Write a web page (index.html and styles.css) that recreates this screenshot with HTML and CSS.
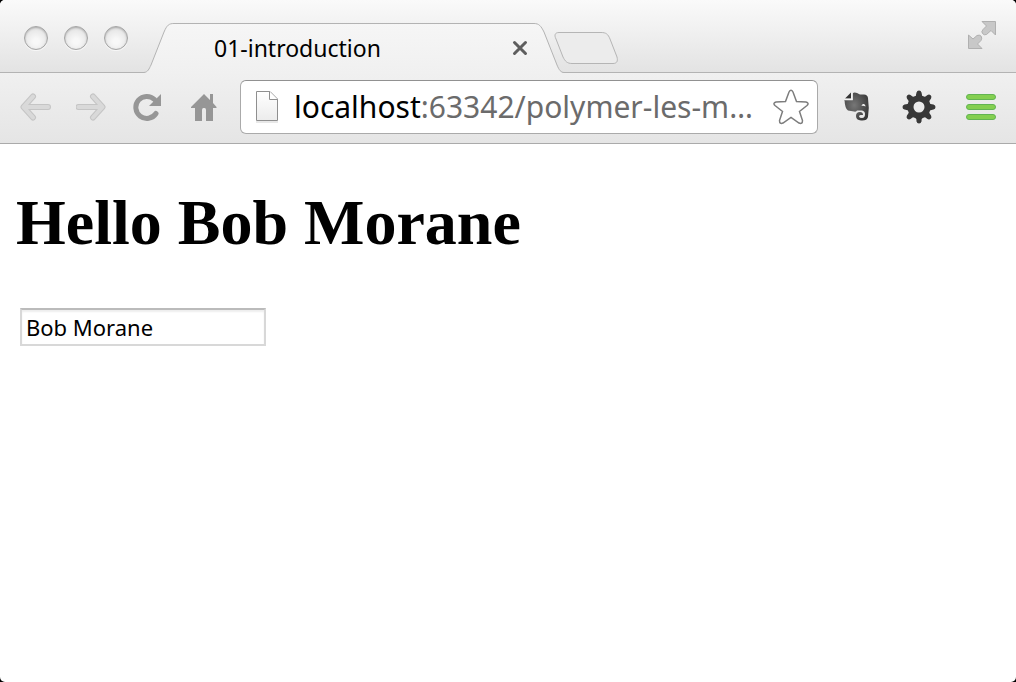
FILE: index.html
```html
<!DOCTYPE html>
<html lang="en">
<head>
<meta charset="utf-8">
<title>01-introduction</title>
<link rel="stylesheet" href="styles.css">
</head>
<body>
<div class="window">
  <header class="tab-strip">
    <div class="lights">
      <button class="light" aria-label="Close window"></button>
      <button class="light" aria-label="Minimize window"></button>
      <button class="light" aria-label="Zoom window"></button>
    </div>
    <div class="tab">
      <svg class="tab-shape" viewBox="0 0 420 50" aria-hidden="true">
        <defs>
          <linearGradient id="tabFill" x1="0" y1="0" x2="0" y2="1">
            <stop offset="0" stop-color="#f6f6f6"/><stop offset="1" stop-color="#f0f0f0"/>
          </linearGradient>
        </defs>
        <path d="M0 50V49.500C4 49 5 46 7 42L20 9C23 2 25 .5 30 .5H390C395 .5 397 3 400 9L413 42C415 47 417 49.500 420 49.500V50Z" fill="url(#tabFill)"/>
        <path d="M0 49.500C4 49 5 46 7 42L20 9C23 2 25 .5 30 .5H390C395 .5 397 3 400 9L413 42C415 47 417 49.500 420 49.500" fill="none" stroke="#b3b3b3"/>
      </svg>
      <span class="tab-title">01-introduction</span>
      <button class="tab-close" aria-label="Close tab">
        <svg width="16" height="16" viewBox="0 0 16 16"><path d="M2.500 2.500l11 11M13.500 2.500l-11 11" stroke="#5e5e5e" stroke-width="3" stroke-linecap="round"/></svg>
      </button>
    </div>
    <button class="new-tab" aria-label="New tab">
      <svg width="66" height="34" viewBox="0 0 66 34"><path d="M6 1.500H48C53 1.500 55 3 57 8L64 26C65 30 64 32.500 60 32.500H19C14 32.500 12 30 10 26L3 8C1 4 2 1.500 6 1.500Z" fill="#ececec" stroke="#b5b5b5"/></svg>
    </button>
    <button class="fullscreen" aria-label="Full screen">
      <svg width="30" height="30" viewBox="0 0 30 30">
        <path d="M15 1.500H28.500V15L24 10.500L19.500 14.500Q17 15.500 15.500 13.500Q14 11.500 16 9.500L19.500 6Z" fill="#c8c8c8" stroke="#b0b0b0"/>
        <path d="M1.500 15L6 19L10 15.500Q12.500 14.500 14 16Q15.500 18 14 20.500L10.500 24L15 28.500H1.500Z" fill="#c8c8c8" stroke="#b0b0b0"/>
      </svg>
    </button>
  </header>

  <nav class="toolbar">
    <div class="nav-buttons">
      <button class="tool" aria-label="Back">
        <svg width="32" height="28" viewBox="0 0 32 28"><path d="M28 14H4M13 3.500L3.500 14L13 24.500" fill="none" stroke="#c5c5c5" stroke-width="6" stroke-linecap="round" stroke-linejoin="round"/><path d="M28 14H4M13 3.500L3.500 14L13 24.500" fill="none" stroke="#d9d9d9" stroke-width="4" stroke-linecap="round" stroke-linejoin="round"/></svg>
      </button>
      <button class="tool" aria-label="Forward">
        <svg width="32" height="28" viewBox="0 0 32 28"><path d="M2.500 14H26M17 3.500L26.500 14L17 24.500" fill="none" stroke="#c5c5c5" stroke-width="6" stroke-linecap="round" stroke-linejoin="round"/><path d="M2.500 14H26M17 3.500L26.500 14L17 24.500" fill="none" stroke="#d9d9d9" stroke-width="4" stroke-linecap="round" stroke-linejoin="round"/></svg>
      </button>
      <button class="tool" aria-label="Reload">
        <svg width="32" height="28" viewBox="0 0 32 28"><path d="M24 20.500A11 11 0 1 1 22.500 6.500" fill="none" stroke="#969696" stroke-width="5" stroke-linecap="round"/><path d="M29 1V13H17Z" fill="#969696"/></svg>
      </button>
      <button class="tool" aria-label="Home">
        <svg width="32" height="28" viewBox="0 0 32 28"><path d="M16 1L22 7V1H25V10L28.500 14V15H25V28H18V17Q18 15 16.500 15H15.500Q14 15 14 17V28H7V15H3V14Z" fill="#969696"/></svg>
      </button>
    </div>
    <div class="address">
      <svg class="page-icon" width="24" height="34" viewBox="0 0 24 34" aria-hidden="true">
        <defs><linearGradient id="paper" x1="0" y1="0" x2="0" y2="1"><stop offset="0" stop-color="#fff"/><stop offset="1" stop-color="#ececec"/></linearGradient></defs>
        <path d="M1 32H23" stroke="#e8e8e8" stroke-width="2"/>
        <path d="M1.500 1.500H15L22.500 9V30.500H1.500Z" fill="url(#paper)" stroke="#8f8f8f"/><path d="M14.500 1.500V9.500H22.500" fill="#fff" stroke="#8f8f8f"/>
      </svg>
      <a class="url" href="#"><span class="host">localhost</span>:63342/polymer-les-m…</a>
      <button class="star" aria-label="Bookmark this page">
        <svg width="36" height="36" viewBox="0 0 36 36"><path d="M16 3Q18 -.5 20 3L23.500 12.500L33 13Q36.500 14 34 16.500L26.500 22.500L29.500 31.500Q29.500 35.500 26 34L18 28.500L10 34Q6.500 35.500 6.500 31.500L9.500 22.500L2 16.500Q-.5 14 3 13L12.500 12.500Z" fill="#fff" stroke="#7d7d7d" stroke-width="1.500"/></svg>
      </button>
    </div>
    <div class="extensions">
      <button class="tool" aria-label="Web clipper">
        <svg width="28" height="30" viewBox="0 0 28 30">
          <defs><radialGradient id="elephant" cx=".4" cy=".45" r=".65"><stop offset="0" stop-color="#777"/><stop offset="1" stop-color="#393939"/></radialGradient></defs>
          <path d="M8.500 1.500Q10 0 13 1L16 2.500H20Q23.500 2.500 24 6Q25.500 16 24 25Q23 29 17 28.500Q12 28 12 24Q12 20 16 20Q19 20 19 23H16.500Q15 23 15 24.500Q15.500 26 18 26Q21 26 21 22Q21 19 18 18.500H13Q12.500 20 10 19.500L4 18.500Q1 17 .5 8H8.500Z" fill="url(#elephant)"/>
          <path d="M1 6.500L7 .500V6.500Z" fill="#333"/><path d="M8 1V7.500H1" fill="none" stroke="#f2f2f2" stroke-width="1.500"/>
          <path d="M17.500 14Q18 11.500 20 12Q21.500 12.500 21.500 14.500Q19.500 13.500 17.500 14Z" fill="#f0f0f0"/>
        </svg>
      </button>
      <button class="tool" aria-label="Settings extension">
        <svg width="34" height="34" viewBox="-17 -17 34 34">
          <defs><path id="tooth" d="M-5 -9.500Q-2.500 -11 -2.500 -14.500Q-2 -16.500 0 -16.500Q2 -16.500 2.500 -14.500Q2.500 -11 5 -9.500Z"/></defs>
          <g fill="#383838"><use href="#tooth"/><use href="#tooth" transform="rotate(45)"/><use href="#tooth" transform="rotate(90)"/><use href="#tooth" transform="rotate(135)"/><use href="#tooth" transform="rotate(180)"/><use href="#tooth" transform="rotate(225)"/><use href="#tooth" transform="rotate(270)"/><use href="#tooth" transform="rotate(315)"/></g>
          <circle r="8.500" fill="none" stroke="#383838" stroke-width="6"/>
        </svg>
      </button>
      <button class="tool" aria-label="Menu">
        <svg width="30" height="28" viewBox="0 0 30 28"><g fill="#84cf50" stroke="#62b452"><rect x=".5" y="1.500" width="29" height="5" rx="2.500"/><rect x=".5" y="11.500" width="29" height="5" rx="2.500"/><rect x=".5" y="21.500" width="29" height="5" rx="2.500"/></g></svg>
      </button>
    </div>
  </nav>

  <main class="page">
    <h1 class="greeting">Hello Bob Morane</h1>
    <input class="name" type="text" value="Bob Morane" aria-label="Name">
  </main>
</div>
</body>
</html>
```

FILE: styles.css
```css
* {
  box-sizing: border-box;
}

body {
  margin: 0;
  background: #000;
  font-family: "Noto Sans", "Open Sans", sans-serif;
}

button {
  display: flex;
  flex: none;
  padding: 0;
  border: 0;
  background: none;
}

svg {
  display: block;
}

.window {
  display: flex;
  flex-direction: column;
  min-height: 100vh;
  overflow: hidden;
  border-radius: 5px;
  background: #fff;
}

.tab-strip {
  display: flex;
  align-items: flex-end;
  height: 73px;
  padding: 0 19px 0 24px;
  border-bottom: 1px solid #b3b3b3;
  background: linear-gradient(#fafafa, #e3e3e3);
}

.lights {
  display: flex;
  gap: 16px;
  padding-bottom: 22px;
}

.light {
  width: 24px;
  height: 24px;
  border: 1px solid #a5a5a5;
  border-radius: 50%;
  background: radial-gradient(circle at 50% 65%, #f8f8f8 15%, #e4e4e4 75%);
  box-shadow: inset 0 1px 2px #aaa, 0 1px 0 #f8f8f8;
}

.tab {
  position: relative;
  display: flex;
  align-items: center;
  justify-content: space-between;
  width: 420px;
  height: 50px;
  margin: 0 0 -1px 16px;
  padding: 0 36px 0 70px;
}

.tab-shape {
  position: absolute;
  inset: 0;
  width: 100%;
  height: 100%;
}

.tab-title,
.tab-close {
  position: relative;
}

.tab-title {
  color: #000;
  font-size: 23px;
  line-height: 30px;
}

.new-tab {
  margin: 0 0 7px -11px;
}

.fullscreen {
  margin: 0 0 22px auto;
}

.toolbar {
  display: flex;
  align-items: center;
  gap: 20px;
  padding: 7px 20px 9px 20px;
  border-bottom: 1px solid #aaa;
  background: linear-gradient(#f0f0f0, #e5e5e5);
}

.nav-buttons {
  display: flex;
  gap: 24px;
}

.address {
  display: flex;
  flex: 1;
  align-items: center;
  min-width: 0;
  height: 54px;
  padding: 0 8px 0 14px;
  border: 1px solid #aaa;
  border-top-color: #919191;
  border-radius: 6px;
  background: #fff;
}

.page-icon {
  flex: none;
}

.url {
  flex: 1;
  margin-left: 15px;
  overflow: hidden;
  color: #6b6b6b;
  font-size: 30px;
  line-height: 40px;
  text-decoration: none;
  white-space: nowrap;
}

.host {
  color: #000;
}

.extensions {
  display: flex;
  align-items: center;
  gap: 30px;
  padding-left: 6px;
}

.page {
  flex: 1;
  padding: 42px 16px;
}

.greeting {
  margin: 0 0 48px;
  font-family: "Liberation Serif", serif;
  font-size: 64px;
  font-weight: bold;
  line-height: 74px;
}

.name {
  display: block;
  width: 246px;
  height: 38px;
  margin: 0 4px;
  padding: 0 4px;
  border: 2px solid #d8d8d8;
  border-top-color: #bbb;
  border-radius: 0;
  background: #fff;
  box-shadow: inset 0 2px 2px #eee;
  color: #000;
  font-family: inherit;
  font-size: 22px;
}
```
